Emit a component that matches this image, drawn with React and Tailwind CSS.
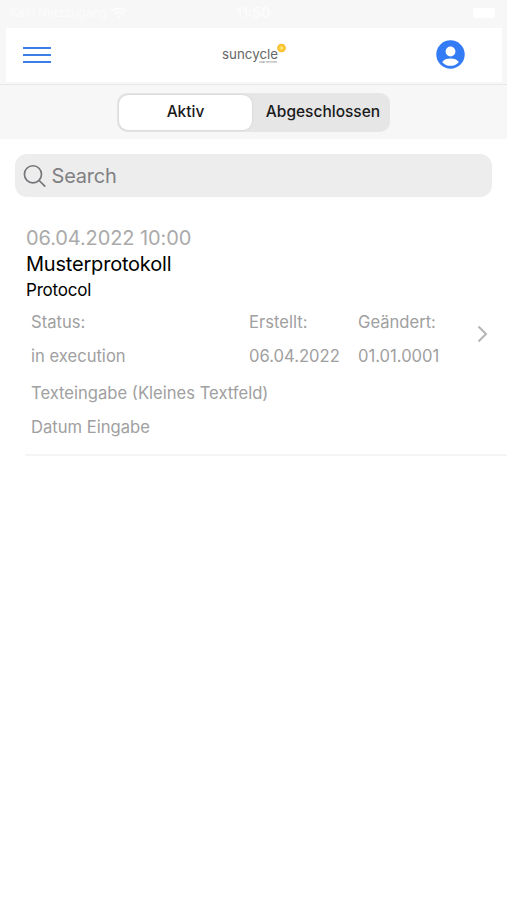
import { useState } from "react";

const tabs = ["Aktiv", "Abgeschlossen"];

const StatusBar = () => (
  <div className="flex h-7 items-start justify-between pl-2.5 pr-3 pt-[5px] leading-4 text-[#fcfcfc]">
    <div className="flex w-[226px] items-center gap-2">
      <span className="w-[93px] whitespace-nowrap text-xs">Kein Netzzugang</span>
      <svg width="16" height="12" viewBox="0 0 16 12" fill="none" stroke="currentColor" strokeWidth="2.2">
        <path d="M1 4.2a10 10 0 0 1 14 0M3.6 7.2a6.2 6.2 0 0 1 8.8 0" />
        <path d="M8 11.5 6 9.4a2.8 2.8 0 0 1 4 0Z" fill="currentColor" stroke="none" />
      </svg>
    </div>
    <span className="w-[50px] text-sm leading-4 font-semibold">11:50</span>
    <div className="flex w-[209px] justify-end pt-[3px]">
      <div className="h-2.5 w-[22px] rounded-[2px] bg-white" />
    </div>
  </div>
);

const Logo = () => (
  <svg className="-mt-px ml-[22px]" width="66" height="24" viewBox="0 0 66 24">
    <defs>
      <radialGradient id="sun">
        <stop offset="0" stopColor="#fff0a8" />
        <stop offset="0.4" stopColor="#ffd543" />
        <stop offset="1" stopColor="#f8b21c" />
      </radialGradient>
    </defs>
    <text x="0" y="16" textLength="56" lengthAdjust="spacingAndGlyphs" fontFamily="Inter, sans-serif" fontSize="13.5" fontWeight="400" fill="#666">
      suncycle
    </text>
    <text x="37" y="19.5" textLength="18" lengthAdjust="spacingAndGlyphs" fontFamily="Inter, sans-serif" fontSize="2.5" fill="#777">
      solar services
    </text>
    <circle cx="59.5" cy="5" r="4.3" fill="url(#sun)" />
  </svg>
);

const Navbar = () => (
  <header className="h-[85px] border-b border-[#e8e8e8] bg-[#f7f7f7]">
    <StatusBar />
    <div className="ml-1.5 mr-[5px] flex h-[54px] items-center justify-between bg-white pl-[17px] pr-[37px]">
      <button className="flex w-7 flex-col gap-[5px]" aria-label="Menu">
        <span className="h-[2px] w-full bg-[#3b7ee8]" />
        <span className="h-[2px] w-full bg-[#3b7ee8]" />
        <span className="h-[2px] w-full bg-[#3b7ee8]" />
      </button>
      <Logo />
      <button aria-label="Account" className="-mt-px">
        <svg width="29" height="29" viewBox="0 0 29 29">
          <circle cx="14.5" cy="14.5" r="14.2" fill="#347bf6" />
          <circle cx="14.5" cy="11.5" r="4.9" fill="#fff" />
          <path d="M6.2 22.2C7.6 19.7 11 18.6 14.5 18.6s6.9 1.1 8.3 3.6a11.3 11.3 0 0 1-16.6 0Z" fill="#fff" />
        </svg>
      </button>
    </div>
  </header>
);

const Segments = ({ active, onChange }) => (
  <div className="flex h-[54px] justify-center bg-[#f7f7f7] pt-2">
    <div className="flex h-[39px] w-[273px] rounded-[10px] bg-[#e6e6e6] p-[2px]">
      {tabs.map((tab) => (
        <button
          key={tab}
          onClick={() => onChange(tab)}
          className={`h-[35px] rounded-[9px] pb-px text-[15.5px] font-medium text-[#1a1a1a] ${
            active === tab ? "w-[133px] bg-white shadow-[0_0_2px_rgba(0,0,0,0.15)]" : "grow pl-1.5"
          }`}
        >
          {tab}
        </button>
      ))}
    </div>
  </div>
);

const SearchBar = () => (
  <div className="mx-[15px] mt-[15px] flex h-[43px] items-center gap-1.5 rounded-xl bg-[#ededed] pl-2">
    <svg width="24" height="24" viewBox="0 0 24 24" fill="none" stroke="#76767a" strokeWidth="1.8" strokeLinecap="round">
      <circle cx="10.6" cy="10.2" r="9.1" />
      <path d="m17.2 16.8 6 6" />
    </svg>
    <input
      placeholder="Search"
      className="w-full bg-transparent pt-px text-xl tracking-[-0.2px] outline-none placeholder:text-[#808083]"
    />
  </div>
);

const Protocol = () => (
  <article className="ml-[25px] mt-7 h-[231px] border-b-2 border-[#f5f5f5] pl-px">
    <div className="text-xl leading-[26px] tracking-[-0.1px] text-[#aaa]">06.04.2022 10:00</div>
    <h2 className="text-xl leading-[26px] tracking-[-0.2px] text-black">Musterprotokoll</h2>
    <div className="text-[17px] leading-[27px] tracking-[-0.2px] text-black">Protocol</div>
    <div className="flex items-start pl-[5px] pr-[19px] pt-px text-[16.6px] leading-[34px] text-[#a0a0a0]">
      <div className="w-[218px]">
        <div>Status:</div>
        <div>in execution</div>
      </div>
      <div className="w-[109px]">
        <div>Erstellt:</div>
        <div>06.04.2022</div>
      </div>
      <div className="grow">
        <div>Geändert:</div>
        <div>01.01.0001</div>
      </div>
      <svg className="mt-5" width="11" height="18" viewBox="0 0 11 18" fill="none" stroke="#b5b5b5" strokeWidth="2">
        <path d="m1.5 1.5 7.5 7.5-7.5 7.5" />
      </svg>
    </div>
    <div className="pl-[5px] pt-[3px] text-[16.6px] leading-[34px] text-[#a0a0a0]">
      <div>Texteingabe (Kleines Textfeld)</div>
      <div>Datum Eingabe</div>
    </div>
  </article>
);

const App = () => {
  const [active, setActive] = useState("Aktiv");

  return (
    <div className="min-h-screen bg-white font-['Inter',sans-serif]">
      <Navbar />
      <Segments active={active} onChange={setActive} />
      <SearchBar />
      <Protocol />
    </div>
  );
};

export default App;
